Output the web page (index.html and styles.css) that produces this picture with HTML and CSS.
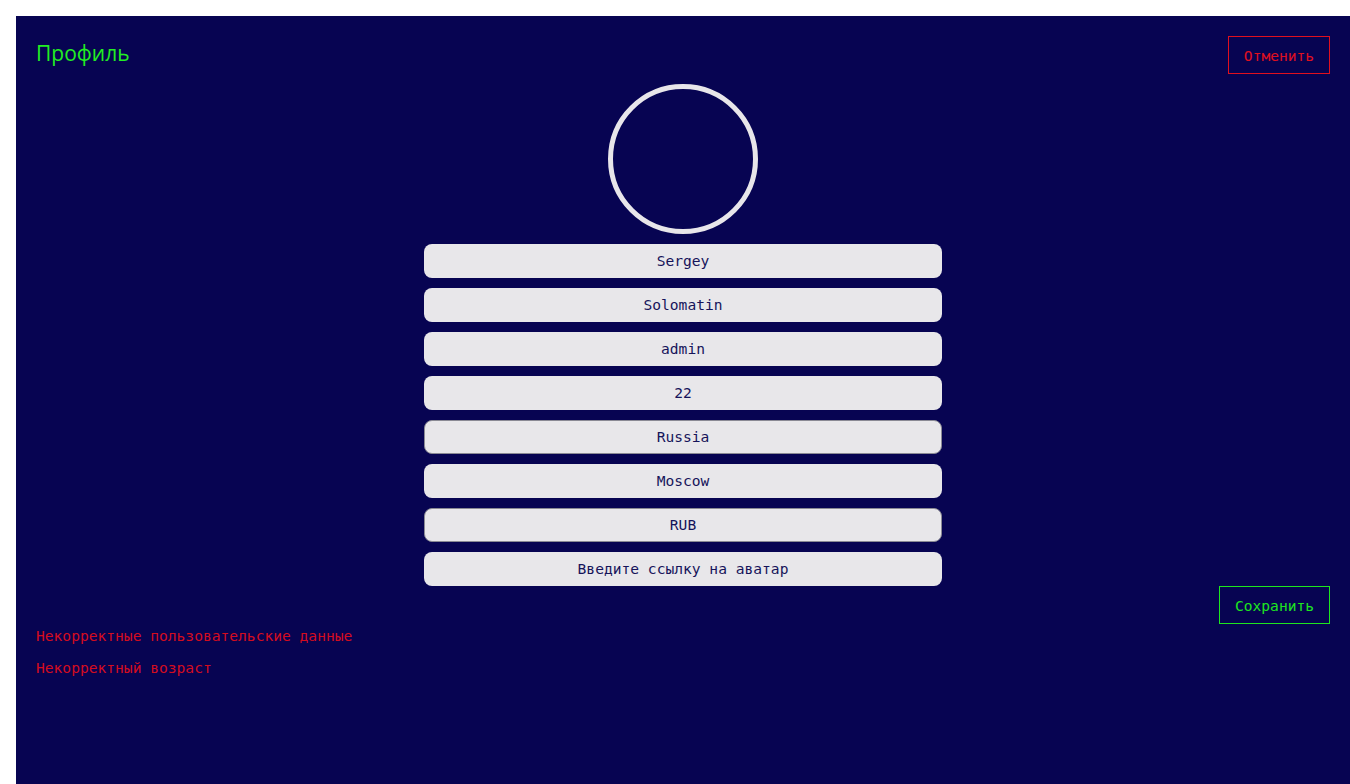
FILE: index.html
```html
<!DOCTYPE html>
<html lang="ru">
<head>
<meta charset="utf-8">
<title>Профиль</title>
<link rel="stylesheet" href="styles.css">
</head>
<body>
<main class="page">
  <header class="header">
    <h1 class="title">Профиль</h1>
    <button class="btn btn-cancel">Отменить</button>
  </header>
  <section class="form">
    <div class="avatar"></div>
    <input class="field" value="Sergey">
    <input class="field" value="Solomatin">
    <input class="field" value="admin">
    <input class="field" value="22">
    <input class="field field-bordered" value="Russia">
    <input class="field" value="Moscow">
    <input class="field field-bordered" value="RUB">
    <input class="field" placeholder="Введите ссылку на аватар">
  </section>
  <div class="actions">
    <button class="btn btn-save">Сохранить</button>
  </div>
  <div class="errors">
    <p class="error">Некорректные пользовательские данные</p>
    <p class="error">Некорректный возраст</p>
  </div>
</main>
</body>
</html>
```

FILE: styles.css
```css
html, body {
  margin: 0;
  padding: 0;
  background: #ffffff;
  height: 100%;
}
body {
  padding: 16px 0 0 16px;
  box-sizing: border-box;
  overflow: hidden;
}
.page {
  background: #070452;
  min-height: 768px;
  box-sizing: border-box;
  padding: 20px 20px 20px 20px;
  font-family: "DejaVu Sans Mono", "Liberation Mono", monospace;
  font-size: 14.6px;
}
.header {
  display: flex;
  justify-content: space-between;
  align-items: flex-start;
  height: 38px;
}
.title {
  margin: 4px 0 0 0;
  font-family: "Open Sans", "Noto Sans", sans-serif;
  font-weight: 500;
  font-size: 21px;
  line-height: 26px;
  color: #22ee22;
}
.btn {
  background: transparent;
  font-family: "DejaVu Sans Mono", "Liberation Mono", monospace;
  font-size: 14.6px;
  height: 38px;
  padding: 0;
  cursor: pointer;
}
.btn-cancel {
  width: 102px;
  border: 1px solid #e0101e;
  color: #e0101e;
}
.btn-save {
  width: 111px;
  border: 1px solid #1ee61e;
  color: #1ee61e;
}
.form {
  display: flex;
  flex-direction: column;
  align-items: center;
  gap: 10px;
  margin-top: 10px;
}
.avatar {
  width: 150px;
  height: 150px;
  box-sizing: border-box;
  border: 5px solid #e8e6ea;
  border-radius: 50%;
}
.field {
  width: 518px;
  height: 34px;
  box-sizing: border-box;
  border: none;
  border-radius: 8px;
  background: #e8e7ea;
  color: #16145a;
  text-align: center;
  font-family: "DejaVu Sans Mono", "Liberation Mono", monospace;
  font-size: 14.6px;
  padding: 0 8px 1px 8px;
  outline: none;
}
.field::placeholder {
  color: #16145a;
  opacity: 1;
}
.field-bordered {
  border: 1px solid #8a8a94;
}
.actions {
  display: flex;
  justify-content: flex-end;
}
.errors {
  display: flex;
  flex-direction: column;
  gap: 12px;
  margin-top: 2px;
}
.error {
  margin: 0;
  line-height: 20px;
  color: #d40c1e;
}
```
